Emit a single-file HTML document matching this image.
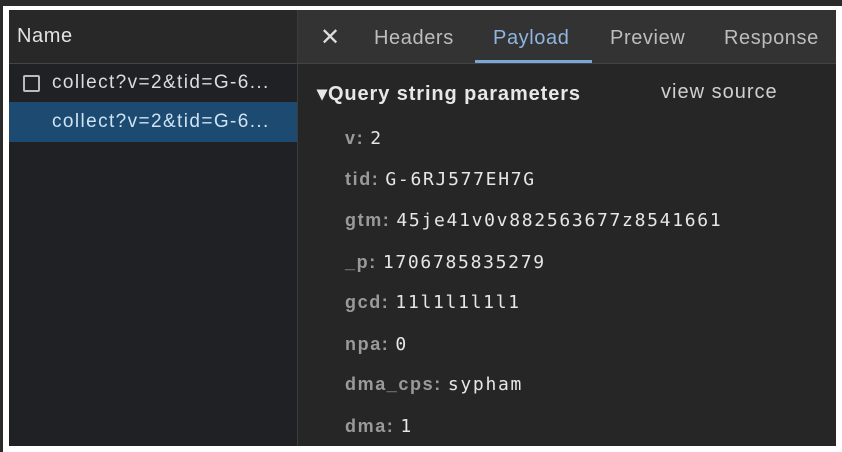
<!DOCTYPE html><html><head><style>
body{margin:0;width:842px;height:452px;background:#fff;position:relative;overflow:hidden;font-family:"Liberation Sans",sans-serif}
.top{position:absolute;left:0;top:0;width:842px;height:6px;background:#2b2b2b}
.lb{position:absolute;left:0;top:0;width:3px;height:452px;background:#2b2b2b}
.box{position:absolute;left:9px;top:10px;width:827px;height:436px;background:#262626}
.left{position:absolute;left:0;top:0;width:288px;height:436px;background:#202124;border-right:1px solid #3c3c3c}
.lh{height:53px;background:#282828;border-bottom:1px solid #444;color:#e3e3e3;font-size:20px;letter-spacing:0.6px;line-height:53px;padding-left:8px}
.row{height:38px;line-height:38px;color:#dcdcdc;font-size:19px;letter-spacing:1.4px;padding-left:43px;position:relative;white-space:nowrap}
.row.sel{background:#1c4a70;color:#cfe3f5;height:40px;line-height:40px}
.cb{position:absolute;left:14px;top:11px;width:13px;height:13px;border:2px solid #bbb;border-radius:2px}
.tabs{position:absolute;left:289px;top:0;width:538px;height:53px;background:#333;border-bottom:1px solid #444;color:#bdbdbd;font-size:20px;letter-spacing:0.6px}
.tabs span{position:absolute;top:17px}
.ul{position:absolute;left:466px;top:50px;width:117px;height:3px;background:#7aa7d6}
.q{position:absolute;left:308px;top:71px;color:#e8e8e8;font-weight:bold;font-size:20px;letter-spacing:0.9px}
.vs{position:absolute;left:652px;top:71px;color:#d0d0d0;font-size:20px;letter-spacing:1px}
.p{position:absolute;left:336px;font-family:"DejaVu Sans Mono","Liberation Mono",monospace;font-size:18px;letter-spacing:1.7px;color:#e6e6e6}
.p b{font-family:"Liberation Sans",sans-serif;font-weight:bold;color:#9a9a9a;font-size:18px;letter-spacing:1.6px;margin-right:6px}
</style></head><body>
<div class="top"></div><div class="lb"></div>
<div class="box">
<div class="left"><div class="lh">Name</div>
<div class="row"><div class="cb"></div>collect?v=2&amp;tid=G-6...</div>
<div class="row sel">collect?v=2&amp;tid=G-6...</div></div>
<div class="tabs"><span style="left:22px;font-size:24px;top:13px;color:#ddd">✕</span><span style="left:76px">Headers</span><span style="left:195px;color:#8fb5e0">Payload</span><span style="left:312px">Preview</span><span style="left:426px">Response</span></div>
<div class="ul"></div>
<div class="q">▾Query string parameters</div><div class="vs">view source</div>
<div class="p" style="top:118px"><b>v:</b>2</div>
<div class="p" style="top:159px"><b>tid:</b>G-6RJ577EH7G</div>
<div class="p" style="top:200px"><b>gtm:</b>45je41v0v882563677z8541661</div>
<div class="p" style="top:242px"><b>_p:</b>1706785835279</div>
<div class="p" style="top:282px"><b>gcd:</b>11l1l1l1l1</div>
<div class="p" style="top:324px"><b>npa:</b>0</div>
<div class="p" style="top:364px"><b>dma_cps:</b>sypham</div>
<div class="p" style="top:406px"><b>dma:</b>1</div>
</div></body></html>
